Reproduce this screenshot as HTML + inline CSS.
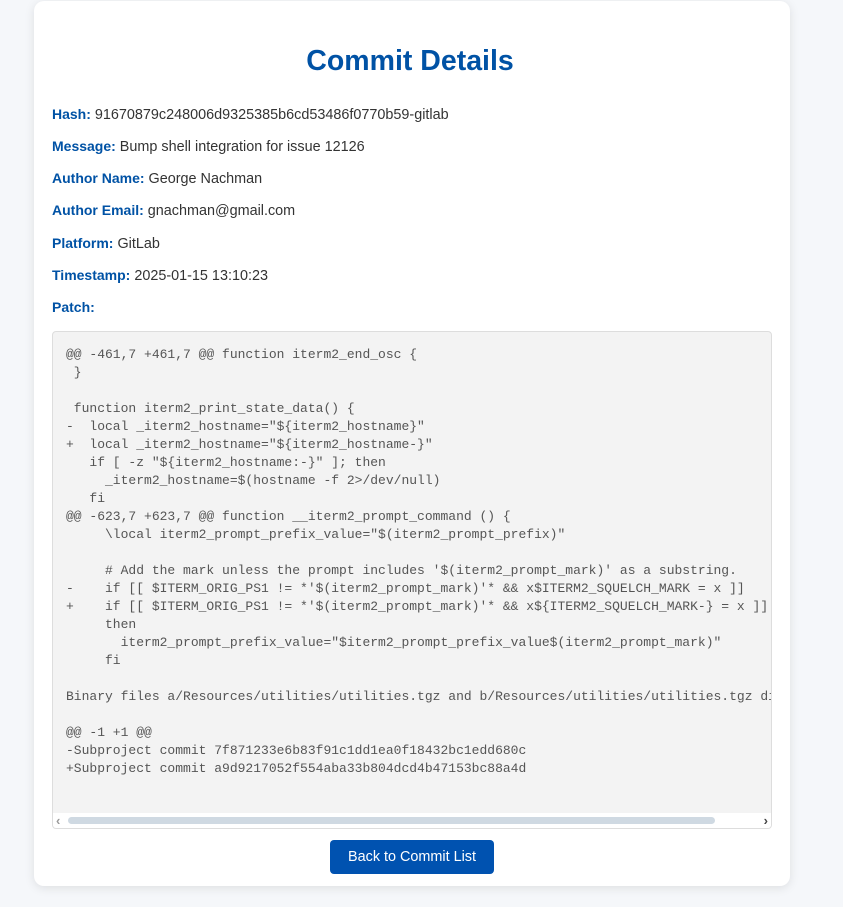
<!DOCTYPE html>
<html><head><meta charset="utf-8"><style>
html,body{margin:0;padding:0;background:#f5f7fa;width:843px;height:907px;overflow:hidden}
body{font-family:"Liberation Sans",Arial,sans-serif;color:#333}
.card{position:absolute;left:34px;top:1px;width:756px;height:885px;background:#fff;border-radius:10px;box-shadow:0 2px 10px rgba(0,0,0,.1)}
h1{position:absolute;left:0;right:0;top:43px;margin:0;text-align:center;font-size:28.5px;font-weight:bold;color:#0052a5;line-height:34px;padding-right:4px}
.f{position:absolute;left:18px;font-size:14.4px;line-height:16px;color:#333}
.f b{color:#0052a5;font-size:14px}
.pre{position:absolute;left:18px;top:330px;width:718px;height:496px;border:1px solid #ddd;border-radius:4px;background:#f3f3f3;overflow:hidden}
pre{margin:0;position:absolute;left:13px;top:14px;font-family:"Liberation Mono","Courier New",monospace;font-size:13px;line-height:18px;color:#555;white-space:pre}
.sb{position:absolute;left:0;right:0;bottom:0;height:15px;background:#fff}
.thumb{position:absolute;left:15px;top:4px;width:647px;height:7px;border-radius:4px;background:#cfd9e2}
.la,.ra{position:absolute;top:0;font-size:13px;color:#999;line-height:15px;font-weight:bold}
.la{left:3px}.ra{right:3px;color:#444}
.btn{position:absolute;left:296px;top:839px;width:164px;height:34px;background:#0052b0;color:#fff;border-radius:4px;font-size:14.4px;line-height:34px;text-align:center}
</style></head><body>
<div class="card">
<h1>Commit Details</h1>
<div class="f" style="top:105px"><b>Hash:</b> 91670879c248006d9325385b6cd53486f0770b59-gitlab</div>
<div class="f" style="top:137px"><b>Message:</b> Bump shell integration for issue 12126</div>
<div class="f" style="top:169px"><b>Author Name:</b> George Nachman</div>
<div class="f" style="top:201px"><b>Author Email:</b> gnachman@gmail.com</div>
<div class="f" style="top:234px"><b>Platform:</b> GitLab</div>
<div class="f" style="top:266px"><b>Timestamp:</b> 2025-01-15 13:10:23</div>
<div class="f" style="top:298px"><b>Patch:</b></div>
<div class="pre"><pre>@@ -461,7 +461,7 @@ function iterm2_end_osc {
 }

 function iterm2_print_state_data() {
-  local _iterm2_hostname="${iterm2_hostname}"
+  local _iterm2_hostname="${iterm2_hostname-}"
   if [ -z "${iterm2_hostname:-}" ]; then
     _iterm2_hostname=$(hostname -f 2&gt;/dev/null)
   fi
@@ -623,7 +623,7 @@ function __iterm2_prompt_command () {
     \local iterm2_prompt_prefix_value="$(iterm2_prompt_prefix)"

     # Add the mark unless the prompt includes '$(iterm2_prompt_mark)' as a substring.
-    if [[ $ITERM_ORIG_PS1 != *'$(iterm2_prompt_mark)'* &amp;&amp; x$ITERM2_SQUELCH_MARK = x ]]
+    if [[ $ITERM_ORIG_PS1 != *'$(iterm2_prompt_mark)'* &amp;&amp; x${ITERM2_SQUELCH_MARK-} = x ]]
     then
       iterm2_prompt_prefix_value="$iterm2_prompt_prefix_value$(iterm2_prompt_mark)"
     fi

Binary files a/Resources/utilities/utilities.tgz and b/Resources/utilities/utilities.tgz differ

@@ -1 +1 @@
-Subproject commit 7f871233e6b83f91c1dd1ea0f18432bc1edd680c
+Subproject commit a9d9217052f554aba33b804dcd4b47153bc88a4d
</pre>
<div class="sb"><span class="la">‹</span><div class="thumb"></div><span class="ra">›</span></div>
</div>
<div class="btn">Back to Commit List</div>
</div>
</body></html>
